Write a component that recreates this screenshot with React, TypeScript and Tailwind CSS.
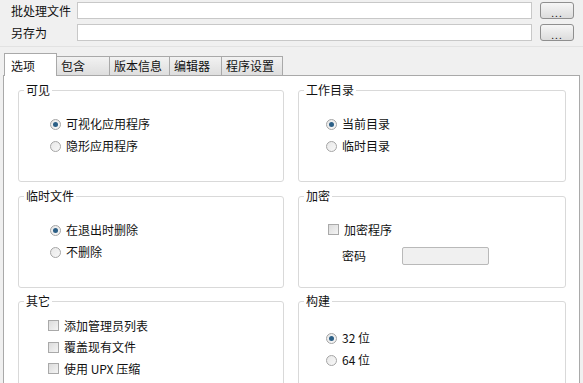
import React from "react";

function Radio({ checked, label }: { checked?: boolean; label: string }) {
  return (
    <div className="flex items-center h-[22px]">
      <span className="w-[11px] h-[11px] rounded-full border border-[#a5a5a5] bg-gradient-to-br from-[#e8e8e8] to-[#f8f8f8] flex items-center justify-center">
        {checked && <span className="w-[5px] h-[5px] rounded-full bg-[#2c5f86]" />}
      </span>
      <span className="ml-[5px]">{label}</span>
    </div>
  );
}

function Check({ label }: { label: string }) {
  return (
    <div className="flex items-center h-[21.5px]">
      <span className="w-[11px] h-[11px] border border-[#a9a9a9] bg-gradient-to-br from-[#dcdcdc] to-[#f4f4f4]" />
      <span className="ml-[5px]">{label}</span>
    </div>
  );
}

function Group({ title, children, className }: { title: string; children: React.ReactNode; className?: string }) {
  return (
    <div className={"relative h-[92px] border border-[#d9d9d9] rounded-[3px] bg-white " + (className ?? "")}>
      <span className="absolute left-[5px] top-[-9px] bg-white px-[2px] leading-[16px]">{title}</span>
      {children}
    </div>
  );
}

export default function App() {
  return (
    <div
      className="w-[583px] h-[383px] overflow-hidden bg-[#f0f0f0] text-[12px] text-[#111] leading-none"
      style={{ fontFamily: '"Noto Sans CJK SC", "Noto Sans", sans-serif' }}
    >
      <div className="pt-[2px] flex flex-col gap-[5px] border-b border-[#e2e2e2] pb-[5px]">
        <div className="flex items-center h-[17px]">
          <span className="w-[77px] pl-[11px]">批处理文件</span>
          <div className="w-[455px] h-[17px] bg-white border border-[#c8c8c8]" />
          <button className="ml-[8px] w-[34px] h-[17px] rounded-[3px] border border-[#8f8f8f] bg-gradient-to-b from-[#f6f6f6] to-[#dcdcdc] text-[10px] leading-[8px] pt-[4px] tracking-[1px]">
            ...
          </button>
        </div>
        <div className="flex items-center h-[17px]">
          <span className="w-[77px] pl-[11px]">另存为</span>
          <div className="w-[455px] h-[17px] bg-white border border-[#c8c8c8]" />
          <button className="ml-[8px] w-[34px] h-[17px] rounded-[3px] border border-[#8f8f8f] bg-gradient-to-b from-[#f6f6f6] to-[#dcdcdc] text-[10px] leading-[8px] pt-[4px] tracking-[1px]">
            ...
          </button>
        </div>
      </div>

      <div className="pl-[3px] pr-[3px] mt-[5px]">
        <div className="flex items-end h-[23px] pl-[1px]">
          <div className="relative z-10 w-[53px] h-[23px] bg-white border border-[#a9a9a9] border-b-0 pl-[6px] pt-[6px] -mb-px">选项</div>
          <div className="w-[53px] h-[19px] bg-gradient-to-b from-[#f2f2f2] to-[#dedede] border border-[#a9a9a9] border-l-0 border-b-0 pl-[4px] pt-[3px]">包含</div>
          <div className="w-[60px] h-[19px] bg-gradient-to-b from-[#f2f2f2] to-[#dedede] border border-[#a9a9a9] border-l-0 border-b-0 pl-[4px] pt-[3px]">版本信息</div>
          <div className="w-[52px] h-[19px] bg-gradient-to-b from-[#f2f2f2] to-[#dedede] border border-[#a9a9a9] border-l-0 border-b-0 pl-[4px] pt-[3px]">编辑器</div>
          <div className="w-[61px] h-[19px] bg-gradient-to-b from-[#f2f2f2] to-[#dedede] border border-[#a9a9a9] border-l-0 border-b-0 pl-[4px] pt-[3px]">程序设置</div>
        </div>
        <div className="h-[320px] bg-white border border-[#a9a9a9] px-[14px] pt-[14px] grid grid-cols-[266px_268px] gap-x-[14px] content-start">
          <Group title="可见">
            <div className="pl-[31px] pt-[22px]">
              <Radio checked label="可视化应用程序" />
              <Radio label="隐形应用程序" />
            </div>
          </Group>
          <Group title="工作目录">
            <div className="pl-[27px] pt-[22px]">
              <Radio checked label="当前目录" />
              <Radio label="临时目录" />
            </div>
          </Group>

          <Group title="临时文件" className="mt-[14px]">
            <div className="pl-[31px] pt-[22px]">
              <Radio checked label="在退出时删除" />
              <Radio label="不删除" />
            </div>
          </Group>
          <Group title="加密" className="mt-[14px]">
            <div className="pl-[29px] pt-[22px]">
              <Check label="加密程序" />
              <div className="flex items-center mt-[6px]">
                <span className="w-[74px] pl-[14px]">密码</span>
                <div className="w-[87px] h-[18px] bg-[#f0f0f0] border border-[#b9b9b9] rounded-[2px]" />
              </div>
            </div>
          </Group>

          <Group title="其它" className="mt-[13px]">
            <div className="pl-[29px] pt-[13px]">
              <Check label="添加管理员列表" />
              <Check label="覆盖现有文件" />
              <Check label="使用 UPX 压缩" />
            </div>
          </Group>
          <Group title="构建" className="mt-[13px]">
            <div className="pl-[27px] pt-[25px]">
              <Radio checked label="32 位" />
              <Radio label="64 位" />
            </div>
          </Group>
        </div>
      </div>
    </div>
  );
}
